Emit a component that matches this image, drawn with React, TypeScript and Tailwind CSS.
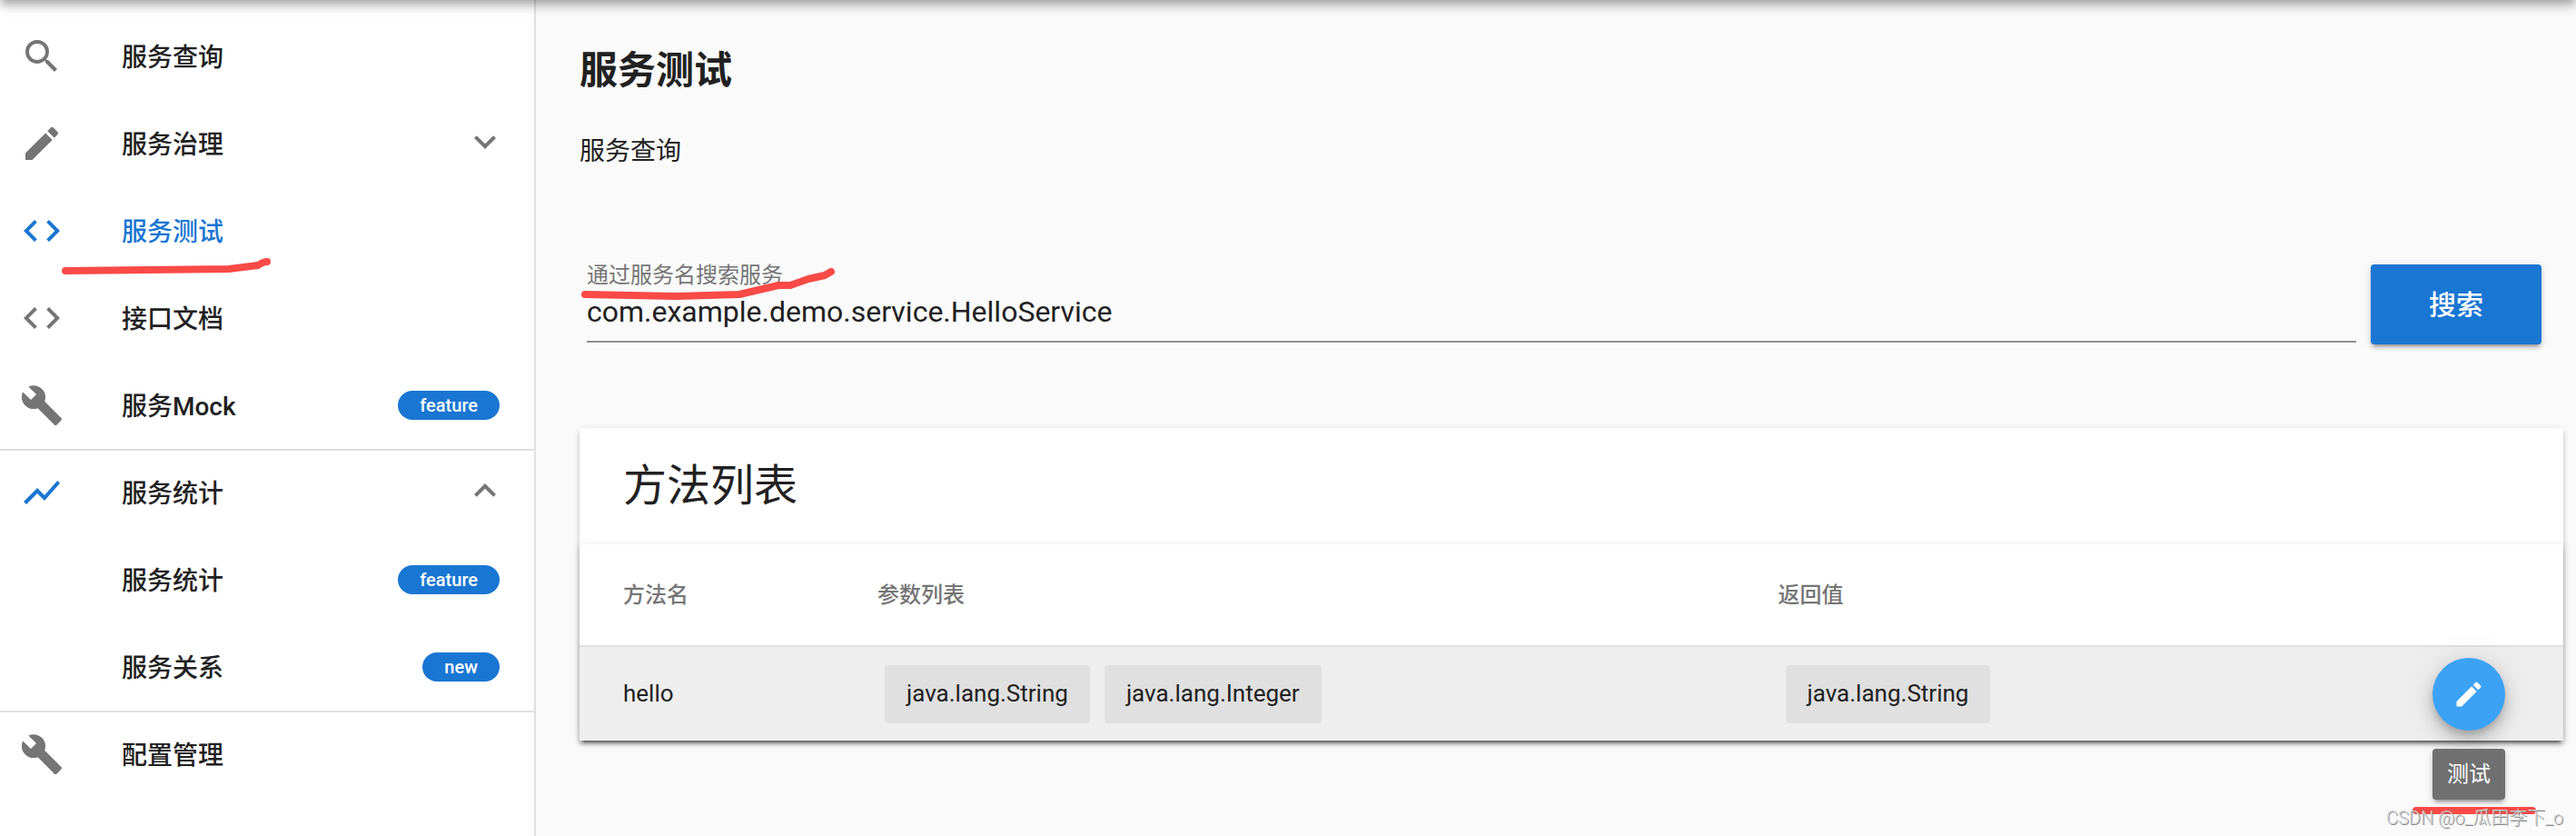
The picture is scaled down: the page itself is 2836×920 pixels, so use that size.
import type { ReactNode } from "react";
import type { IconType } from "react-icons";
import { MdBuild, MdCode, MdEdit, MdExpandLess, MdExpandMore, MdSearch, MdShowChart } from "react-icons/md";

type NavItem = {
  label: string;
  icon?: IconType;
  active?: boolean;
  iconActive?: boolean;
  badge?: string;
  expand?: "more" | "less";
  marked?: boolean;
  divider?: boolean;
};

const navItems: NavItem[] = [
  { label: "服务查询", icon: MdSearch },
  { label: "服务治理", icon: MdEdit, expand: "more" },
  { label: "服务测试", icon: MdCode, active: true, marked: true },
  { label: "接口文档", icon: MdCode },
  { label: "服务Mock", icon: MdBuild, badge: "feature" },
  { label: "服务统计", icon: MdShowChart, iconActive: true, expand: "less", divider: true },
  { label: "服务统计", badge: "feature" },
  { label: "服务关系", badge: "new" },
  { label: "配置管理", icon: MdBuild, divider: true },
];

const methods = [
  { name: "hello", params: ["java.lang.String", "java.lang.Integer"], result: "java.lang.String" },
];

const Chip = ({ children }: { children: ReactNode }) => (
  <span className="inline-flex h-16 items-center rounded bg-[#e0e0e0] px-6">{children}</span>
);

const Stroke = ({ d, className }: { d: string; className: string }) => (
  <svg
    className={`pointer-events-none absolute overflow-visible ${className}`}
    fill="none"
    stroke="#f94a47"
    strokeWidth="8"
    strokeLinecap="round"
    strokeLinejoin="round"
    aria-hidden="true"
  >
    <path d={d} />
  </svg>
);

const NavLink = ({ item }: { item: NavItem }) => {
  const Icon = item.icon;
  const Chevron = item.expand === "more" ? MdExpandMore : MdExpandLess;

  return (
    <li>
      {item.divider && <hr className="-mb-0.5 border-t-2 border-[#e0e0e0]" />}
      <a href="#" className="relative flex h-24 items-center pr-[38px] pl-[22px]">
        <span className="w-28 shrink-0">
          {Icon && (
            <Icon className={`size-12 ${item.active || item.iconActive ? "text-[#1976d2]" : "text-[#757575]"}`} />
          )}
        </span>
        <span className={`flex-1 pt-1 text-[28px] leading-10 font-medium ${item.active ? "text-[#1976d2]" : ""}`}>
          {item.label}
        </span>
        {item.badge && (
          <span className="flex h-8 items-center rounded-full bg-[#1976d2] px-6 text-xl font-medium text-white">
            {item.badge}
          </span>
        )}
        {item.expand && <Chevron className="-mr-2 mb-1 size-12 text-[#757575]" />}
        {item.marked && (
          <Stroke className="top-20 left-[68px] h-4 w-60" d="M4 12 L184 10 L216 6 Q222 2 226 2" />
        )}
      </a>
    </li>
  );
};

const App = () => {
  return (
    <div className="relative flex min-h-screen overflow-hidden bg-[#fafafa] font-[Roboto,'Noto_Sans_CJK_SC',sans-serif] text-[#212121]">
      {/* App bar shadow */}
      <div className="pointer-events-none absolute inset-x-0 -top-32 z-10 h-32 shadow-[0_4px_8px_-2px_rgba(0,0,0,0.2),0_8px_10px_0_rgba(0,0,0,0.14),0_2px_20px_0_rgba(0,0,0,0.12)]" />

      {/* Sidebar */}
      <nav className="w-[590px] shrink-0 border-r-2 border-[#e0e0e0] bg-white pt-3.5">
        <ul>
          {navItems.map((item, index) => (
            <NavLink key={index} item={item} />
          ))}
        </ul>
      </nav>

      {/* Content */}
      <main className="min-w-0 flex-1 pt-[46px] pr-3.5 pl-12">
        <h1 className="text-[42px] leading-16 font-bold">服务测试</h1>
        <p className="mt-[37px] text-[28px] leading-10">服务查询</p>

        {/* Search */}
        <form className="mt-25 mr-6 ml-2 flex items-end gap-4" onSubmit={(e) => e.preventDefault()}>
          <div className="relative mb-0.5 flex-1 border-b-2 border-[#8f8f8f] pb-2">
            <label htmlFor="service" className="block text-2xl leading-8 text-[#757575]">
              通过服务名搜索服务
            </label>
            <input
              id="service"
              type="text"
              defaultValue="com.example.demo.service.HelloService"
              className="block h-12 w-full bg-transparent text-[32px] outline-none"
            />
            <Stroke
              className="top-3 left-0 h-8 w-72"
              d="M-2 25 L97 27 L168 25 L211 15 L224 15 L244 8 L262 4 L269 0"
            />
          </div>
          <button
            type="submit"
            className="h-22 w-47 rounded bg-[#1976d2] text-[30px] font-medium text-white shadow-[0_6px_2px_-4px_rgba(0,0,0,0.2),0_4px_4px_0_rgba(0,0,0,0.14),0_2px_10px_0_rgba(0,0,0,0.12)]"
          >
            搜索
          </button>
        </form>

        {/* Methods */}
        <section className="mt-23 rounded bg-white shadow-[0_6px_2px_-4px_rgba(0,0,0,0.2),0_4px_4px_0_rgba(0,0,0,0.14),0_2px_10px_0_rgba(0,0,0,0.12)]">
          <h2 className="flex h-32 items-center px-12 text-5xl">方法列表</h2>
          <table className="w-full table-fixed bg-white text-left text-[26px] shadow-[0_6px_2px_-4px_rgba(0,0,0,0.2),0_4px_4px_0_rgba(0,0,0,0.14),0_2px_10px_0_rgba(0,0,0,0.12)]">
            <thead>
              <tr className="h-28 border-b-2 border-[#e0e0e0] text-2xl text-[#757575]">
                <th className="w-70 px-12 font-medium">方法名</th>
                <th className="w-[45.4%] px-12 font-medium">参数列表</th>
                <th className="px-12 font-medium">返回值</th>
                <th className="w-48" />
              </tr>
            </thead>
            <tbody>
              {methods.map((method) => (
                <tr key={method.name} className="h-26 bg-[#eeeeee]">
                  <td className="px-12">{method.name}</td>
                  <td className="px-12">
                    <div className="ml-2 flex gap-4">
                      {method.params.map((param) => (
                        <Chip key={param}>{param}</Chip>
                      ))}
                    </div>
                  </td>
                  <td className="px-12">
                    <div className="ml-2 flex">
                      <Chip>{method.result}</Chip>
                    </div>
                  </td>
                  <td className="pr-16">
                    <div className="relative ml-auto size-20">
                      <button
                        type="button"
                        aria-label="测试"
                        className="flex size-20 items-center justify-center rounded-full bg-[#3ba2f5] text-white shadow-[0_6px_10px_-2px_rgba(0,0,0,0.2),0_12px_20px_0_rgba(0,0,0,0.14),0_2px_36px_0_rgba(0,0,0,0.12)]"
                      >
                        <MdEdit className="size-9" />
                      </button>
                      <div
                        role="tooltip"
                        className="absolute top-25 left-0 flex h-14 w-20 items-center justify-center rounded bg-[#707070] text-2xl text-white shadow-[0_6px_2px_-4px_rgba(0,0,0,0.2),0_4px_4px_0_rgba(0,0,0,0.14),0_2px_10px_0_rgba(0,0,0,0.12)]"
                      >
                        测试
                      </div>
                      <Stroke className="top-42 -left-6 h-2 w-36" d="M6 0 H134" />
                    </div>
                  </td>
                </tr>
              ))}
            </tbody>
          </table>
        </section>
      </main>

      {/* Watermark */}
      <p className="pointer-events-none absolute right-3.5 bottom-1 text-xl leading-8 font-light text-[#d4d4d4] [text-shadow:1px_1px_0_#888]">
        CSDN @o_瓜田李下_o
      </p>
    </div>
  );
};

export default App;
